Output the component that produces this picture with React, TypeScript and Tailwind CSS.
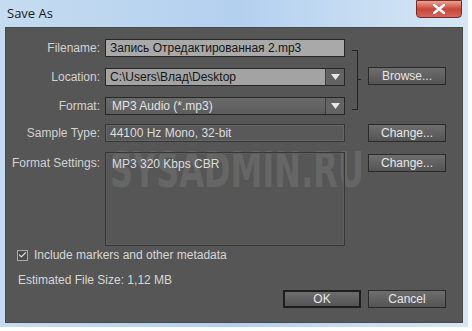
import { Check } from 'lucide-react'

const ui = { fontFamily: '"Liberation Sans", Arial, sans-serif' }

function Btn({ label, def = false }: { label: string; def?: boolean }) {
  return (
    <div
      className={`flex h-[18px] w-[78px] items-center justify-center bg-gradient-to-b from-[#6e6e6e] to-[#545454] text-[12px] text-[#e6e6e6] ${
        def ? 'border-2 border-[#1e1e1e]' : 'border border-[#2a2a2a]'
      }`}
      style={ui}
    >
      {label}
    </div>
  )
}

function Arrow() {
  return (
    <div className="flex w-[19px] items-center justify-center border-l border-[#3e3e3e] bg-[#636363]">
      <svg width="9" height="6" viewBox="0 0 9 6">
        <path d="M0 0h9L4.5 6z" fill="#e8e8e8" />
      </svg>
    </div>
  )
}

function Label({ text }: { text: string }) {
  return (
    <div className="w-[99px] shrink-0 whitespace-nowrap pr-[5px] text-right text-[12px] text-[#d2d2d2]" style={ui}>
      {text}
    </div>
  )
}

export default function App() {
  return (
    <div className="h-[331px] w-[472px] overflow-hidden bg-white">
      <div className="flex h-[327px] w-[468px] flex-col bg-gradient-to-r from-[#c5dcf0] via-[#b3d0ef] to-[#d6e6f5] px-[5px] pb-[4px]">
        {/* title bar */}
        <div className="relative flex h-[27px] shrink-0 items-center">
          <span className="pl-[2px] text-[13px] text-[#1a1a1a]" style={{ fontFamily: '"Open Sans", "Noto Sans", sans-serif' }}>
            Save As
          </span>
          <div className="absolute right-[1px] top-0 flex h-[18px] w-[46px] items-center justify-center rounded-b-[4px] border border-[#7a2a22] bg-gradient-to-b from-[#e9a396] via-[#c9463a] to-[#d0665a]">
            <svg width="12" height="10" viewBox="0 0 12 10">
              <path d="M1 1l10 8M11 1L1 9" stroke="#fff" strokeWidth="2.6" strokeLinecap="square" />
            </svg>
          </div>
        </div>

        {/* dialog body */}
        <div className="relative flex flex-1 flex-col border border-[#4a4a4a] bg-[#565656] pt-[11px]">
          {/* watermark */}
          <div
            className="pointer-events-none absolute left-[104px] top-[117px] origin-left scale-x-[0.64] text-[50px] font-bold leading-none text-[#666666]"
            style={{ fontFamily: '"DejaVu Sans", sans-serif' }}
          >
            SYSADMIN.RU
          </div>

          <div className="relative flex">
            <div className="flex flex-col gap-[11px]">
              <div className="flex items-center">
                <Label text="Filename:" />
                <div className="flex h-[18px] w-[240px] items-center border border-[#262626] bg-[#a9a9a9] px-[4px] text-[12px] text-[#151515]" style={ui}>
                  Запись Отредактированная 2.mp3
                </div>
              </div>
              <div className="flex items-center">
                <Label text="Location:" />
                <div className="flex h-[18px] w-[240px] border border-[#262626]">
                  <div className="flex flex-1 items-center bg-[#a3a3a3] px-[4px] text-[12px] text-[#151515]" style={ui}>
                    C:\Users\Влад\Desktop
                  </div>
                  <Arrow />
                </div>
              </div>
              <div className="flex items-center">
                <Label text="Format:" />
                <div className="flex h-[18px] w-[240px] border border-[#262626]">
                  <div className="flex flex-1 items-center bg-gradient-to-b from-[#6a6a6a] to-[#5c5c5c] px-[6px] text-[12px] text-[#e2e2e2]" style={ui}>
                    MP3 Audio (*.mp3)
                  </div>
                  <Arrow />
                </div>
              </div>
            </div>
            <svg width="23" height="62" viewBox="0 0 23 62" className="mt-[11px]">
              <path d="M7 0.5h5.5v59H7M12.5 29.5H16" stroke="#232323" fill="none" />
            </svg>
            <div className="flex items-center pb-[3px]">
              <Btn label="Browse..." />
            </div>
          </div>

          <div className="relative mt-[9px] flex items-center">
            <Label text="Sample Type:" />
            <div className="flex h-[18px] w-[240px] items-center border border-[#363636] bg-[#595959] px-[4px] text-[12px] text-[#dcdcdc] shadow-[inset_0_0_0_1px_#666]" style={ui}>
              44100 Hz Mono, 32-bit
            </div>
            <div className="w-[23px]" />
            <Btn label="Change..." />
          </div>

          <div className="relative mt-[10px] flex items-start">
            <div className="pt-[2px]">
              <Label text="Format Settings:" />
            </div>
            <div className="h-[94px] w-[240px] border border-[#363636] px-[6px] pt-[2px] text-[12px] text-[#dcdcdc] shadow-[inset_0_0_0_1px_#5e5e5e]" style={ui}>
              MP3 320 Kbps CBR
            </div>
            <div className="w-[23px]" />
            <div className="pt-[2px]">
              <Btn label="Change..." />
            </div>
          </div>

          <div className="relative mt-[0px] flex items-center gap-[6px] pl-[11px] text-[12px] text-[#d6d6d6]" style={ui}>
            <div className="flex h-[11px] w-[11px] items-center justify-center border border-[#aaa] bg-[#4a4a4a]">
              <Check size={10} strokeWidth={3} color="#e0e0e0" />
            </div>
            Include markers and other metadata
          </div>

          <div className="relative mt-[7px] pl-[12px] text-[12px] text-[#d6d6d6]" style={ui}>
            Estimated File Size: 1,12 MB
          </div>

          <div className="flex-1" />
          <div className="relative flex justify-end gap-[7px] pb-[14px] pr-[16px]">
            <Btn label="OK" def />
            <Btn label="Cancel" />
          </div>
        </div>
      </div>
    </div>
  )
}
